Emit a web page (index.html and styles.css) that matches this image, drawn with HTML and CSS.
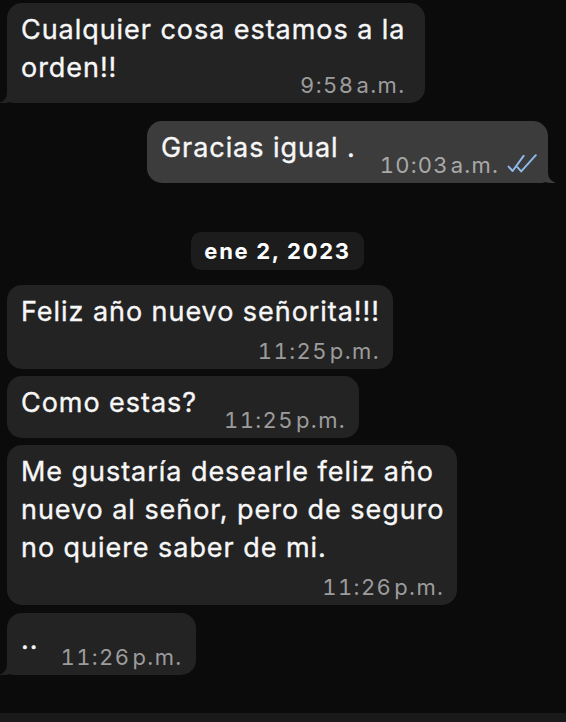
FILE: index.html
```html
<!DOCTYPE html>
<html lang="es">
<head>
<meta charset="utf-8">
<title>Chat</title>
<link rel="stylesheet" href="styles.css">
</head>
<body>
<main class="chat">
  <div class="bubble in tail first">
    <span class="text">Cualquier cosa estamos a la<br>orden!!</span><span class="meta"><span class="time">9:58</span><span class="ampm">a.m.</span></span>
  </div>

  <div class="bubble out tail sent">
    <span class="text">Gracias igual .</span><span class="meta"><span class="time">10:03</span><span class="ampm">a.m.</span><svg class="ticks" viewBox="0 0 30 19" width="30" height="19"><path d="M1.6 12.6 L5.6 17 L16.6 1.8 M10.6 13.4 L14.2 17.4 L28.8 1.2" fill="none" stroke="#8fb9ea" stroke-width="2" stroke-linecap="round" stroke-linejoin="round"/></svg></span>
  </div>

  <div class="date-pill">ene 2, 2023</div>

  <div class="bubble in after-date">
    <span class="text">Feliz año nuevo señorita!!!</span>
    <span class="meta below"><span class="time">11:25</span><span class="ampm">p.m.</span></span>
  </div>

  <div class="bubble in">
    <span class="text">Como estas?</span><span class="meta"><span class="time">11:25</span><span class="ampm">p.m.</span></span>
  </div>

  <div class="bubble in">
    <span class="text">Me gustaría desearle feliz año<br>nuevo al señor, pero de seguro<br>no quiere saber de mi.</span>
    <span class="meta below"><span class="time">11:26</span><span class="ampm">p.m.</span></span>
  </div>

  <div class="bubble in tail last">
    <span class="text">..</span><span class="meta near"><span class="time">11:26</span><span class="ampm">p.m.</span></span>
  </div>
</main>
<footer class="input-bar"></footer>
</body>
</html>
```

FILE: styles.css
```css
html, body {
  margin: 0;
  padding: 0;
}

body {
  background: #0b0b0b;
  width: 566px;
  height: 722px;
  overflow: hidden;
  font-family: "Inter", "Liberation Sans", "Noto Sans", sans-serif;
  color: #ffffff;
  display: flex;
  flex-direction: column;
}

.chat {
  display: flex;
  flex-direction: column;
  align-items: flex-start;
  gap: 7px;
  padding: 3px 18px 0 7px;
  flex: 1;
}

.bubble {
  position: relative;
  background: #232323;
  border-radius: 15px;
  padding: 8px 13px 5px 14px;
  max-width: 446px;
  font-size: 27px;
  line-height: 38px;
  letter-spacing: 0.95px;
}

.bubble.first {
  padding-right: 20px;
}

.bubble.out {
  align-self: flex-end;
  background: #3c3c3c;
  padding-right: 11px;
}

.sent {
  margin-top: 11px;
}

.after-date {
  margin-top: 8px;
}

.last {
  margin-top: 1px;
}

.text {
  color: #f7f7f7;
  -webkit-text-stroke: 0.35px #f7f7f7;
}

.meta {
  float: right;
  margin: 24px 0 0 27px;
  font-size: 22px;
  line-height: 25px;
  letter-spacing: 1.4px;
  font-variant-numeric: tabular-nums;
  color: #9c9c9c;
  display: flex;
  align-items: center;
}

.meta.near {
  margin-left: 22px;
}

.out .meta {
  color: #a9a9a9;
  margin-left: 24px;
  letter-spacing: 1.2px;
}

.meta.below {
  float: none;
  display: flex;
  justify-content: flex-end;
  margin: 8px 0 0 0;
}

.ampm {
  margin-left: 2px;
}

.ticks {
  margin-left: 8px;
  margin-top: -4px;
}

/* bubble tails */
.tail.in {
  border-bottom-left-radius: 6px;
}

.tail.out {
  border-bottom-right-radius: 6px;
}

.tail::before,
.tail::after {
  content: "";
  position: absolute;
  bottom: 0;
  height: 14px;
}

.tail.in::before {
  left: -7px;
  width: 20px;
  background: #232323;
  border-bottom-right-radius: 16px 14px;
}

.tail.in::after {
  left: -10px;
  width: 10px;
  background: #0b0b0b;
  border-bottom-right-radius: 10px;
}

.tail.out::before {
  right: -7px;
  width: 20px;
  background: #3c3c3c;
  border-bottom-left-radius: 16px 14px;
}

.tail.out::after {
  right: -10px;
  width: 10px;
  background: #0b0b0b;
  border-bottom-left-radius: 10px;
}

.date-pill {
  align-self: center;
  margin-top: 42px;
  background: #1c1c1c;
  border-radius: 10px;
  padding: 6px 13px;
  font-size: 22px;
  line-height: 26px;
  font-weight: 700;
  letter-spacing: 1.7px;
  color: #ffffff;
}

.input-bar {
  height: 9px;
  background: #1a1a1a;
  flex: none;
}
```
